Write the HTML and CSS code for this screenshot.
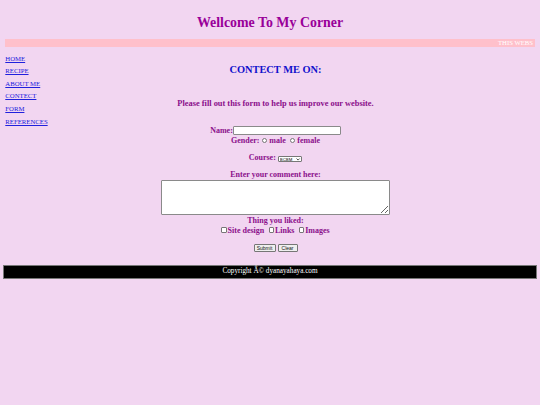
FILE: index.html
```html
<!DOCTYPE html>
<html lang="en">
<head>
<meta charset="utf-8">
<title>Wellcome To My Corner</title>
<link rel="stylesheet" href="styles.css">
</head>
<body>
<h1 class="title">Wellcome To My Corner</h1>
<div class="ticker"><span class="ticker-text">THIS WEBS</span></div>
<div class="layout">
  <nav class="side">
    <a href="#">HOME</a>
    <a href="#">RECIPE</a>
    <a href="#">ABOUT ME</a>
    <a href="#">CONTECT</a>
    <a href="#">FORM</a>
    <a href="#">REFERENCES</a>
  </nav>
  <main class="content">
    <h2 class="contact">CONTECT ME ON:</h2>
    <h3 class="intro">Please fill out this form to help us improve our website.</h3>
    <form class="survey">
      <div class="row">Name:<input type="text" class="name-input"></div>
      <div class="row">Gender:<input type="radio" name="g" class="radio">male<input type="radio" name="g" class="radio radio-2">female</div>
      <div class="row course">Course: <span class="select-box"><select class="select"><option>BCBM</option></select><svg class="chev" viewBox="0 0 6 4" width="4.2" height="2.8"><path d="M0.8 0.8 L3 3 L5.2 0.8" fill="none" stroke="#222" stroke-width="1.1"/></svg></span></div>
      <div class="row comment-label">Enter your comment here:</div>
      <textarea class="comment"></textarea>
      <div class="row liked">Thing you liked:</div>
      <div class="row"><input type="checkbox" class="check check-1">Site design<input type="checkbox" class="check">Links<input type="checkbox" class="check">Images</div>
      <div class="row buttons"><button type="button" class="btn btn-submit">Submit</button><button type="button" class="btn btn-clear">Clear</button></div>
    </form>
  </main>
</div>
<footer class="footer">Copyright Â© dyanayahaya.com</footer>
</body>
</html>
```

FILE: styles.css
```css
html, body {
  margin: 0;
  padding: 0;
}
body {
  background: #f2d6f1;
  padding: 0 3.6px;
  font-family: "Liberation Serif", "Times New Roman", serif;
  height: 405px;
  box-sizing: border-box;
}
.title {
  margin: 0;
  padding-top: 13.5px;
  line-height: 17px;
  font-size: 13.9px;
  font-weight: bold;
  color: #990099;
  text-align: center;
  margin-bottom: 8.5px;
}
.ticker {
  margin: 0 1.4px;
  height: 8px;
  background: #ffc0cb;
  overflow: hidden;
  white-space: nowrap;
  padding-left: 493px;
  font-size: 6.7px;
  line-height: 8px;
  color: #ffffff;
}
.layout {
  display: grid;
}
.side, .content {
  grid-area: 1 / 1;
}
.side {
  display: flex;
  flex-direction: column;
  align-items: flex-start;
  padding-top: 5.7px;
  margin-left: 1.7px;
  font-size: 6.75px;
  line-height: 12.6px;
  z-index: 1;
  align-self: start;
}
.side a {
  color: #2020dd;
}
.content {
  padding-left: 11px;
  text-align: center;
}
.contact {
  margin: 15.5px 0 0;
  font-size: 10.4px;
  line-height: 13px;
  color: #1010cc;
}
.intro {
  margin: 23.8px 0 0;
  font-size: 8.4px;
  line-height: 10px;
  color: #8b0f8b;
}
.survey {
  margin: 17px 0 0;
  font-size: 8px;
  font-weight: bold;
  color: #8b0f8b;
}
.row {
  line-height: 10px;
  height: 10px;
}
.name-input {
  width: 108px;
  height: 8.7px;
  box-sizing: border-box;
  border: 0.7px solid #8a8a8a;
  border-radius: 1px;
  background: #fff;
  margin: 0;
  padding: 0;
  vertical-align: -2px;
}
.radio {
  appearance: none;
  width: 5.4px;
  height: 5.4px;
  margin: 0 2.2px 0 2.2px;
  border: 0.6px solid #777;
  border-radius: 50%;
  background: #fff;
  box-sizing: border-box;
  vertical-align: 0px;
}
.radio-2 {
  margin-left: 4px;
}
.course {
  margin-top: 7px;
}
.select-box {
  display: inline-flex;
  align-items: center;
  width: 24.5px;
  height: 6.2px;
  box-sizing: border-box;
  border: 0.6px solid #777;
  border-radius: 1px;
  background: #fff;
  vertical-align: -0.5px;
  padding: 0 0.8px 0 1px;
  gap: 0.6px;
}
.select {
  appearance: none;
  flex: 1;
  min-width: 0;
  height: 5px;
  font-size: 4.3px;
  line-height: 5px;
  padding: 0;
  margin: 0;
  border: 0;
  background: transparent;
  color: #000;
  font-family: "Liberation Sans", Arial, sans-serif;
}
.chev {
  display: block;
  flex: none;
}
.comment-label {
  margin-top: 7px;
}
.comment {
  display: block;
  margin: 0 auto 1px;
  width: 228.4px;
  height: 34.4px;
  box-sizing: border-box;
  border: 0.7px solid #8a8a8a;
  border-radius: 1px;
  background: #fff;
  padding: 0;
  resize: both;
}
.liked {
  margin-top: 0;
}
.check {
  appearance: none;
  width: 5.4px;
  height: 5.4px;
  margin: 0 0.8px 0 4.5px;
  border: 0.6px solid #777;
  border-radius: 1px;
  background: #fff;
  box-sizing: border-box;
  vertical-align: 0px;
}
.check-1 {
  margin-left: 0;
}
.buttons {
  margin-top: 8.5px;
  height: 9px;
  display: flex;
  justify-content: center;
  gap: 2px;
}
.btn {
  height: 8px;
  padding: 0;
  margin: 0;
  font-size: 5px;
  font-family: "Liberation Sans", Arial, sans-serif;
  color: #111;
  background: #efefef;
  border: 0.6px solid #767676;
  border-radius: 1px;
  line-height: 6px;
}
.btn-submit {
  width: 22px;
}
.btn-clear {
  width: 20px;
}
.footer {
  margin: 12px -0.6px 0;
  background: #000;
  border: 0.8px solid #777;
  color: #fff;
  text-align: center;
  font-size: 7.2px;
  line-height: 11.4px;
}
```
